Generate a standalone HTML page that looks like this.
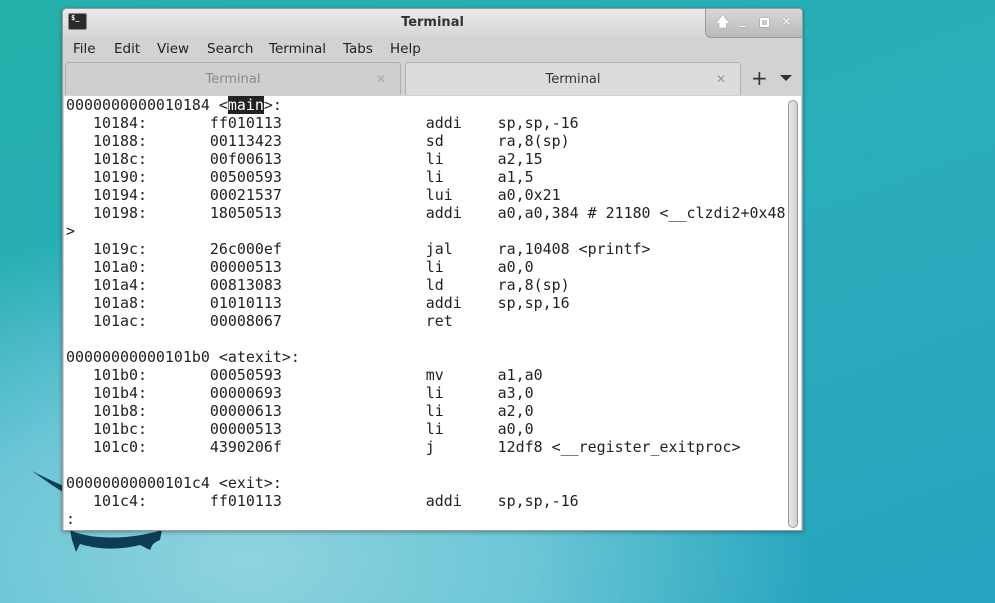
<!DOCTYPE html>
<html><head><meta charset="utf-8"><style>
html,body{margin:0;width:995px;height:603px;overflow:hidden}
body{position:relative;font-family:"DejaVu Sans","Liberation Sans",sans-serif;}
.bg{position:absolute;left:0;top:0;width:995px;height:603px;
background:radial-gradient(ellipse 700px 420px at 250px 560px,#8fd3df 0%,#6cc6d6 40%,rgba(60,180,200,0) 80%),linear-gradient(160deg,#25b0aa 0%,#2aaebb 45%,#28a4c0 100%);}
.win{position:absolute;left:62px;top:8px;width:739px;height:521px;background:#d2d2d2;border:1px solid #9a9a9a;border-radius:4px 4px 0 0;box-shadow:0 1px 4px rgba(0,0,0,.35)}
.title{position:relative;height:28px;background:linear-gradient(#ecebeb,#d6d5d5);text-align:center;font-size:13px;font-weight:bold;color:#333;line-height:28px;border-radius:4px 4px 0 0}
.ico{position:absolute;left:5px;top:4px;width:19px;height:17px;background:#2a2a2a;border:1px solid #888;border-radius:2px;color:#fff;font:bold 7px "DejaVu Sans Mono";line-height:9px;padding-left:2px;box-sizing:border-box;text-align:left}
.btns{position:absolute;right:0;top:0;width:96px;height:28px;background:linear-gradient(#d8d8d8,#b9b9b9);border-left:1px solid #999;border-bottom:1px solid #999;border-radius:0 4px 0 6px;color:#fff;font-size:13px;font-weight:bold}
.btns span{position:absolute;top:0;line-height:28px;text-shadow:0 0 1px #555}
.menu{position:relative;height:24px;font-size:13.5px;color:#222;line-height:24px}
.menu span{position:absolute;top:0}
.tab{position:absolute;top:53px;height:33px;box-sizing:border-box;border:1px solid #b0b0b0;border-bottom:none;border-radius:3px 3px 0 0;font-size:13px;text-align:center;line-height:33px}
.term{position:absolute;left:1px;top:87px;width:737px;height:434px;background:#fff}
pre{margin:0;position:absolute;left:2px;top:0;font:14.95px/18px "DejaVu Sans Mono",monospace;color:#222}
.hl{background:#222;color:#fff}
.sb{position:absolute;right:3px;top:4px;width:8px;height:426px;border:1px solid #999;border-radius:5px;background:linear-gradient(90deg,#e8e8e8,#d0d0d0)}
</style></head><body>
<div class="bg"></div>
<svg style="position:absolute;left:0;top:440px" width="200" height="120"><path d="M32 31 C50 40 60 45 75 50 L70 56 C55 48 45 40 32 31Z" fill="#0d3d55"/><path d="M70 90 C90 100 130 100 162 90 L160 100 C150 104 152 108 150 110 L140 105 C120 110 100 110 80 104 L76 112 L72 100Z" fill="#0d3d55"/></svg>
<div class="win">
<div class="title">Terminal<div class="ico">$_</div>
<div class="btns"><span style="left:10px">🡅</span><span style="left:33px;top:-2px">_</span><span style="left:54px;top:9px;width:9px;height:9px;border:2px solid #fff;box-sizing:border-box;box-shadow:0 0 1px #555"></span><span style="left:75px">✕</span></div></div>
<div class="menu"><span style="left:10px">File</span><span style="left:51px">Edit</span><span style="left:94px">View</span><span style="left:144px">Search</span><span style="left:206px">Terminal</span><span style="left:280px">Tabs</span><span style="left:327px">Help</span></div>
<div class="tab" style="left:2px;width:336px;background:#cfcfcf;color:#8a8a8a">Terminal<span style="position:absolute;right:14px;color:#aaa;font-size:12px">✕</span></div>
<div class="tab" style="left:342px;width:336px;background:#dcdcdc;color:#333">Terminal<span style="position:absolute;right:14px;color:#999;font-size:12px">✕</span></div>
<div style="position:absolute;left:688px;top:57px;font-size:20px;color:#333">+</div>
<div style="position:absolute;left:717px;top:66px;width:0;height:0;border-left:6px solid transparent;border-right:6px solid transparent;border-top:6px solid #333"></div>
<div class="term"><pre>0000000000010184 &lt;<span class="hl">main</span>&gt;:
   10184:       ff010113                addi    sp,sp,-16
   10188:       00113423                sd      ra,8(sp)
   1018c:       00f00613                li      a2,15
   10190:       00500593                li      a1,5
   10194:       00021537                lui     a0,0x21
   10198:       18050513                addi    a0,a0,384 # 21180 &lt;__clzdi2+0x48
&gt;
   1019c:       26c000ef                jal     ra,10408 &lt;printf&gt;
   101a0:       00000513                li      a0,0
   101a4:       00813083                ld      ra,8(sp)
   101a8:       01010113                addi    sp,sp,16
   101ac:       00008067                ret

00000000000101b0 &lt;atexit&gt;:
   101b0:       00050593                mv      a1,a0
   101b4:       00000693                li      a3,0
   101b8:       00000613                li      a2,0
   101bc:       00000513                li      a0,0
   101c0:       4390206f                j       12df8 &lt;__register_exitproc&gt;

00000000000101c4 &lt;exit&gt;:
   101c4:       ff010113                addi    sp,sp,-16
:</pre><div class="sb"></div></div>
</div>
</body></html>
